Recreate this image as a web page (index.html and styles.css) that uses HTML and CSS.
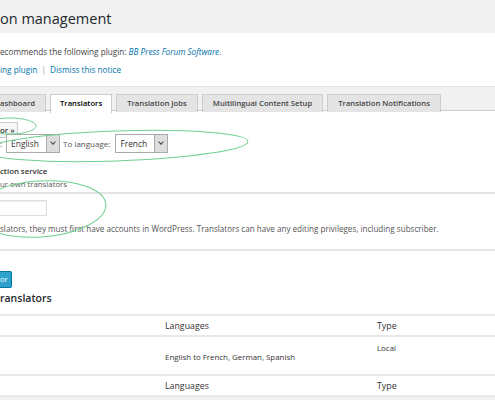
FILE: index.html
```html
<!DOCTYPE html>
<html lang="en">
<head>
    <meta charset="UTF-8">
    <title>Translation management</title>
    <link rel="stylesheet" href="styles.css">
</head>
<body>
    <div class="wrap">
        <h2 class="page-title">on management</h2>

        <!-- Plugin notice -->
        <div class="notice">
            <p>ecommends the following plugin: <a class="plugin-link">BB Press Forum Software</a>.</p>
            <p><a>ing plugin</a> <span class="sep">|</span> <a>Dismiss this notice</a></p>
        </div>

        <!-- Tabs -->
        <div class="tabs">
            <span class="tab first">ashboard</span>
            <span class="tab active">Translators</span>
            <span class="tab">Translation Jobs</span>
            <span class="tab">Multilingual Content Setup</span>
            <span class="tab">Translation Notifications</span>
        </div>

        <div class="panel">
            <div class="add-row">
                <button class="btn">or &raquo;</button>
            </div>
            <div class="lang-row">
                <span class="label">:</span>
                <span class="select english">English<span class="arrow"></span></span>
                <span class="label">To language:</span>
                <span class="select french">French<span class="arrow"></span></span>
            </div>

            <div class="service">
                <p class="service-title">ction service</p>
                <p class="service-opt">ur own translators</p>
            </div>
            <div class="user-row">
                <span class="user-input"></span>
            </div>
            <p class="description">slators, they must first have accounts in WordPress. Translators can have any editing privileges, including subscriber.</p>
        </div>

        <div class="actions">
            <button class="btn-primary">or</button>
        </div>

        <h3 class="list-title">ranslators</h3>
        <table class="translators">
            <thead>
                <tr><th class="col-name"></th><th class="col-lang">Languages</th><th>Type</th></tr>
            </thead>
            <tbody>
                <tr><td></td><td class="langs">English to French, German, Spanish</td><td class="type">Local</td></tr>
            </tbody>
            <tfoot>
                <tr><th></th><th>Languages</th><th>Type</th></tr>
            </tfoot>
        </table>
    </div>

    <!-- hand drawn highlight marks -->
    <svg class="marks" width="495" height="400" viewBox="0 0 495 400">
        <ellipse cx="10" cy="126" rx="26" ry="8" />
        <ellipse cx="116" cy="146" rx="132" ry="15" transform="rotate(-2 116 146)" />
        <ellipse cx="40" cy="209" rx="66" ry="28" transform="rotate(-4 40 209)" />
    </svg>
</body>
</html>
```

FILE: styles.css
```css
body {
    margin: 0;
    font-family: "Open Sans", "Noto Sans", sans-serif;
    background-color: #f1f1f1;
    color: #444;
    overflow: hidden;
}

.wrap {
    width: 495px;
}

/* Title */
.page-title {
    margin: 0;
    height: 33px;
    line-height: 38px;
    font-size: 14.5px;
    font-weight: 400;
    color: #23282d;
}

/* Notice */
.notice {
    background-color: #fff;
    height: 54px;
    padding-top: 13px;
    box-sizing: border-box;
    border-bottom: 1px solid #e2e2e2;
    font-size: 8.2px;
}

.notice p {
    margin: 0 0 6px 0;
    line-height: 12px;
}

.notice a {
    color: #0073aa;
}

.notice .plugin-link {
    font-style: italic;
}

.notice .sep {
    color: #999;
    margin: 0 2px;
}

/* Tabs */
.tabs {
    display: flex;
    gap: 4px;
    padding-top: 7px;
    height: 24px;
    box-sizing: border-box;
    border-bottom: 1px solid #ccc;
}

.tab {
    background-color: #e4e4e4;
    border: 1px solid #ccc;
    border-bottom: none;
    height: 17px;
    line-height: 16px;
    padding: 0 10px;
    font-size: 7.7px;
    font-weight: 600;
    color: #464646;
    white-space: nowrap;
}

.tab.first {
    padding-left: 0;
    border-left: none;
    width: 35px;
}

.tab.active {
    background-color: #fff;
    color: #000;
    height: 18px;
    margin-bottom: -1px;
    padding: 0 9px;
}

/* Panel */
.panel {
    background-color: #fff;
    padding-top: 5px;
}

.add-row {
    height: 16px;
}

.btn {
    font-family: inherit;
    font-size: 7.8px;
    font-weight: 600;
    color: #333;
    background-color: #f7f7f7;
    border: 1px solid #ccc;
    border-left: none;
    height: 16px;
    padding: 0 3px 0 0;
    margin: 0;
    line-height: 14px;
}

.lang-row {
    display: flex;
    align-items: center;
    gap: 3px;
    margin-top: 2px;
    height: 19px;
    font-size: 8px;
    color: #555;
}

.lang-row .label {
    margin-right: 1px;
}

.select {
    position: relative;
    display: inline-block;
    height: 19px;
    line-height: 17px;
    box-sizing: border-box;
    border: 1px solid #aaa;
    background-color: #fff;
    font-size: 8.4px;
    color: #333;
    padding-left: 4px;
}

.select.english {
    width: 54px;
}

.select.french {
    width: 53px;
    margin-left: 1px;
}

.select .arrow {
    position: absolute;
    top: 0;
    right: 0;
    width: 12px;
    height: 17px;
    background-color: #ddd;
    border-left: 1px solid #aaa;
}

.select .arrow::after {
    content: "";
    position: absolute;
    left: 4px;
    top: 5px;
    width: 3px;
    height: 3px;
    border-right: 1.3px solid #444;
    border-bottom: 1.3px solid #444;
    transform: rotate(45deg);
}

.service {
    margin-top: 12px;
    font-size: 7.8px;
}

.service p {
    margin: 0;
    line-height: 13px;
}

.service-title {
    font-weight: 600;
    color: #333;
}

.service-opt {
    color: #555;
    border-bottom: 2px solid #e4e4e4;
    height: 14px;
}

.user-row {
    padding-top: 6px;
    height: 16px;
}

.user-input {
    display: block;
    width: 47px;
    height: 16px;
    box-sizing: border-box;
    border: 1px solid #ddd;
    border-left: none;
    box-shadow: inset 0 1px 2px rgba(0, 0, 0, 0.07);
}

.description {
    margin: 0;
    font-size: 8.1px;
    line-height: 12px;
    color: #555;
    height: 26px;
    padding-top: 7px;
    border-bottom: 2px solid #e4e4e4;
}

/* Actions */
.actions {
    background-color: #fff;
    padding-top: 14px;
    height: 31px;
    box-sizing: border-box;
}

.btn-primary {
    font-family: inherit;
    font-size: 7.6px;
    color: #fff;
    background-color: #2ea2cc;
    border: 1px solid #0074a2;
    border-left: none;
    border-radius: 0 2px 2px 0;
    height: 17px;
    padding: 0 3px 0 0;
    margin: 0;
}

.list-title {
    margin: 0;
    background-color: #fff;
    font-size: 10.5px;
    font-weight: 600;
    color: #23282d;
    height: 32px;
    line-height: 32px;
}

/* Table */
.translators {
    width: 100%;
    border-collapse: collapse;
    background-color: #fff;
}

.translators th,
.translators td {
    text-align: left;
    padding: 0 0 0 5px;
    font-weight: 400;
}

.translators thead tr {
    border-top: 2px solid #e8e8e8;
    border-bottom: 2px solid #e8e8e8;
}

.translators th {
    height: 19px;
    font-size: 8.8px;
    color: #333;
}

.translators .col-name {
    width: 155px;
}

.translators .col-lang {
    width: 207px;
}

.translators td {
    height: 34px;
    font-size: 7.9px;
    color: #333;
}

.translators td.type {
    vertical-align: top;
    padding-top: 6px;
    height: 28px;
}

.translators td.langs {
    padding-top: 3px;
}

.translators tbody tr {
    border-bottom: 2px solid #e8e8e8;
}

.translators tfoot tr {
    border-bottom: 2px solid #e8e8e8;
}

/* Highlight marks */
.marks {
    position: absolute;
    top: 0;
    left: 0;
    pointer-events: none;
}

.marks ellipse {
    fill: none;
    stroke: #6fd08f;
    stroke-width: 1;
}
```
